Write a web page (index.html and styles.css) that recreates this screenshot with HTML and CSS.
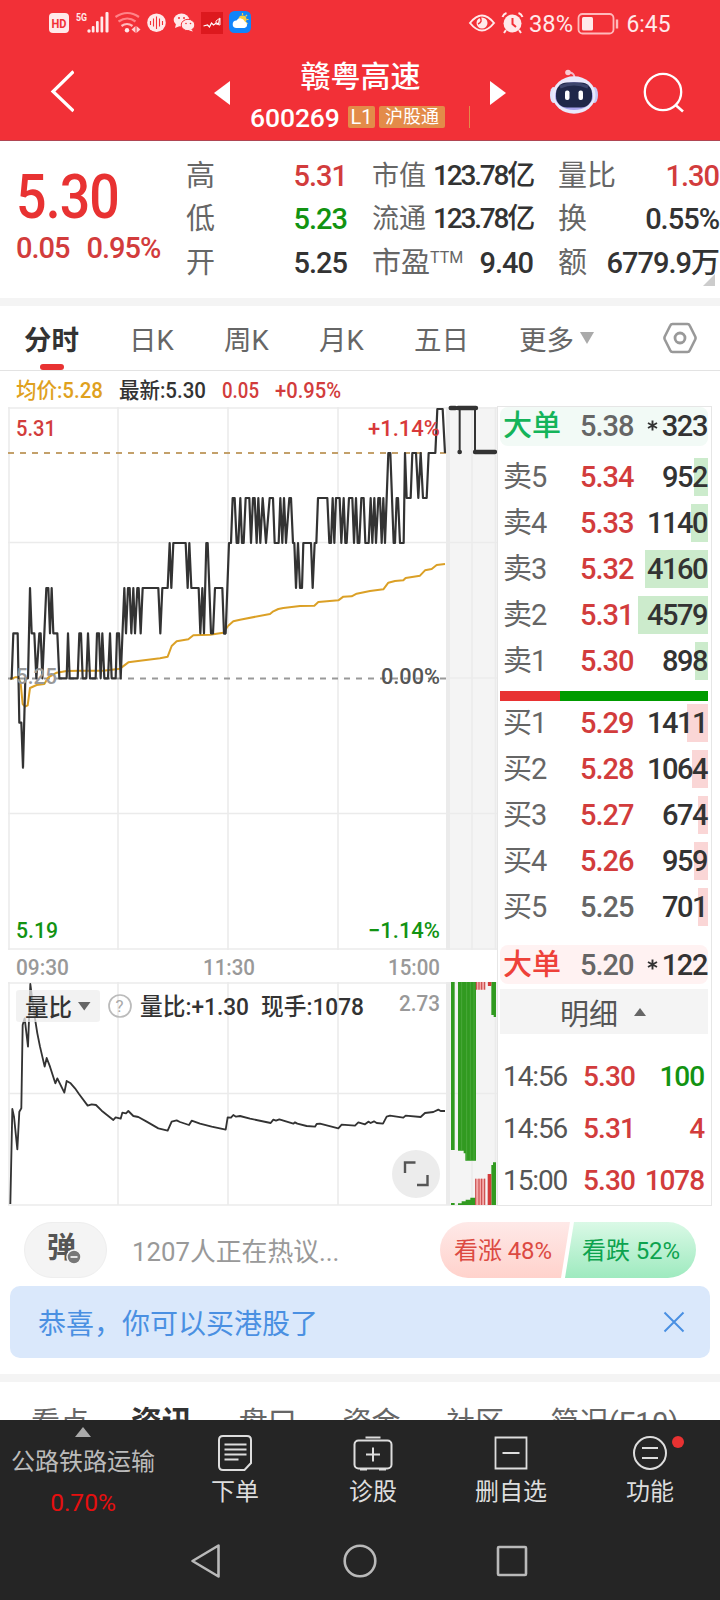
FILE: index.html
```html
<!DOCTYPE html>
<html lang="zh-CN">
<head>
<meta charset="utf-8">
<title>赣粤高速 600269</title>
<link rel="stylesheet" href="styles.css">
</head>
<body>
<div class="screen">
<header class="header">
  <div class="status">
    <svg class="status-left" width="206" height="28" viewBox="48 9 206 28">
      <rect x="49" y="13" width="20" height="20" rx="4" fill="#ffe9ea"/>
      <text x="51.500" y="28" font-size="13" font-weight="700" fill="#f23037" textLength="15" lengthAdjust="spacingAndGlyphs">HD</text>
      <text x="76" y="20.500" font-size="11" font-weight="700" fill="#ffe9ea" textLength="11" lengthAdjust="spacingAndGlyphs">5G</text>
      <g fill="#ffe9ea"><circle cx="89" cy="31" r="1.700"/><rect x="91.800" y="26" width="2.700" height="6.500" rx="1"/><rect x="96" y="21" width="2.700" height="11.500" rx="1"/><rect x="100.500" y="16.500" width="2.700" height="16" rx="1"/><rect x="105.500" y="12" width="3" height="20.500" rx="1"/></g>
      <g fill="none" stroke="#ff8388" stroke-width="2.200"><path d="M115.500 17q12-8 23.500 0M118.500 21.500q9-6 17 0"/><path d="M121.500 26q5.500-4 11 0" stroke="#ffb9bb"/></g>
      <circle cx="127" cy="30.300" r="2.200" fill="#ffe9ea"/><path d="M131.500 29.500l4-3.500v7zM140.500 29.500l-4-3.500v7z" fill="#ffd0d2"/>
      <circle cx="156.500" cy="22.700" r="9.300" fill="#ffe9ea"/><path d="M150.500 21v4M153.500 18.500v8M156.500 16.500v12.500M159.500 18.500v8M162.500 21v4" stroke="#f23037" stroke-width="1.100"/>
      <ellipse cx="181.500" cy="20" rx="7.800" ry="6.500" fill="#ffe9ea"/><path d="M176 24l-1 4 5-2z" fill="#ffe9ea"/><ellipse cx="188" cy="25" rx="6.800" ry="5.700" fill="#ffe9ea" stroke="#f23037"/><path d="M191 29l2 2.500-4-1z" fill="#ffe9ea"/><g fill="#f23037"><circle cx="179" cy="18" r="1"/><circle cx="184" cy="18" r="1"/><circle cx="186" cy="23.500" r=".8"/><circle cx="190.500" cy="23.500" r=".8"/></g>
      <rect x="201" y="12" width="22" height="22" fill="#dd191e"/><path d="M203.500 26l4-1 2 2 2-4 2 2 3-2 2 1 1-5" fill="none" stroke="#fff" stroke-width="1.200"/><path d="M216 24v-3l4-3v7z" fill="none" stroke="#ffe9ea"/>
      <rect x="229" y="11" width="22" height="22" rx="5.500" fill="#1184fb"/><circle cx="242.500" cy="19.500" r="4" fill="#f9cf43"/><path d="M242.500 13v2M247 15l-1.500 1.500M248.500 19.500h-2M247.500 24l-1.500-1.500" stroke="#f9cf43" stroke-width="1.200"/><path d="M236.500 28a3.800 3.800 0 0 1 0-7.600 4.600 4.600 0 0 1 8.200 1.200 3.300 3.300 0 0 1-.2 6.400z" fill="#fff"/>
    </svg>
    <svg class="status-right" width="206" height="28" viewBox="466 9 206 28">
      <path d="M470 23q12-15 24 0-12 15-24 0z" fill="none" stroke="#ffe9ea" stroke-width="2"/><circle cx="482" cy="23" r="5.500" fill="#ffe9ea"/><path d="M480 17q3 5-2 7" fill="none" stroke="#f23037" stroke-width="1.500"/>
      <circle cx="512.500" cy="23.500" r="9" fill="#ffe9ea"/><path d="M512.500 18v6l3.500 3" fill="none" stroke="#f23037" stroke-width="2"/><path d="M502.500 17q1-3 4-4M522.500 17q-1-3-4-4M506 30l-2 3M519 30l2 3" stroke="#ffe9ea" stroke-width="2" fill="none"/>
      <text x="529" y="32" font-size="23" fill="#ffe9ea" textLength="44" lengthAdjust="spacingAndGlyphs">38%</text>
      <rect x="578.500" y="14" width="35" height="19.500" rx="4" fill="none" stroke="#ffb9bb" stroke-width="1.800"/><rect x="582" y="17" width="11" height="13.500" rx="1.500" fill="#ffe9ea"/><path d="M617 19.500v9" stroke="#ffb9bb" stroke-width="2.400"/>
      <text x="626.500" y="32" font-size="23" fill="#ffe9ea" textLength="44" lengthAdjust="spacingAndGlyphs">6:45</text>
    </svg>
  </div>
  <div class="titlebar">
    <svg class="back" width="24" height="46" viewBox="50 68 24 46"><path d="M73.500 71.500L53 91.500l20.500 19.500" fill="none" stroke="#fff" stroke-width="3.200"/></svg>
    <svg class="prev" width="16" height="24" viewBox="0 0 16 24"><path d="M0 12L16 0v24z" fill="#fff"/></svg>
    <div class="stock">
      <div class="stock-name">赣粤高速</div>
      <div class="stock-code"><span class="code">600269</span><span class="tag tag-l">L1</span><span class="tag">沪股通</span><i class="tick"></i></div>
    </div>
    <svg class="next" width="16" height="24" viewBox="0 0 16 24"><path d="M16 12L0 0v24z" fill="#fff"/></svg>
    <svg class="robot" width="50" height="46" viewBox="549 68 50 46">
      <path d="M574.500 77q0-5-5-5.500" fill="none" stroke="#f3b7c8" stroke-width="1.800"/><circle cx="568" cy="71.500" r="2.800" fill="#f9c9d3"/>
      <ellipse cx="553.500" cy="94" rx="3.500" ry="8" fill="#dfe3fb"/><ellipse cx="594.500" cy="94" rx="3.500" ry="8" fill="#c6c8f6"/>
      <ellipse cx="574" cy="94" rx="21.500" ry="18.700" fill="#e9e9fb"/><ellipse cx="574" cy="95" rx="19" ry="14" fill="#a9a5ee"/>
      <rect x="556" y="81.500" width="36" height="25" rx="11" fill="#1f2749"/><path d="M560 86q14-6 28 0" stroke="#3c456c" stroke-width="3" fill="none"/>
      <rect x="565" y="89.500" width="4.500" height="9.500" rx="2" fill="#fff"/><rect x="578.500" y="89.500" width="4.500" height="9.500" rx="2" fill="#fff"/>
    </svg>
    <svg class="search" width="42" height="42" viewBox="643 72 42 42"><circle cx="663" cy="92" r="18.200" fill="none" stroke="#fff" stroke-width="2.300"/><path d="M675 104.500l8 7" stroke="#fff" stroke-width="2.600"/></svg>
  </div>
</header>

<section class="quote">
  <div class="price">
    <div class="last">5.30</div>
    <div class="change num"><span>0.05</span><span>0.95%</span></div>
  </div>
  <dl class="stats">
    <div><dt>高</dt><dd class="up">5.31</dd></div><div class="mid"><dt>市值</dt><dd class="tight">123.78亿</dd></div><div><dt class="wide">量比</dt><dd class="up">1.30</dd></div>
    <div><dt>低</dt><dd class="down">5.23</dd></div><div class="mid"><dt>流通</dt><dd class="tight">123.78亿</dd></div><div><dt>换</dt><dd>0.55%</dd></div>
    <div><dt>开</dt><dd>5.25</dd></div><div class="mid"><dt class="wide">市盈<sup>TTM</sup></dt><dd>9.40</dd></div><div><dt>额</dt><dd>6779.9万</dd></div>
  </dl>
  <i class="corner"></i>
</section>

<nav class="periods">
  <span class="period p1 active">分时</span><span class="period p2">日K</span><span class="period p2">周K</span><span class="period p2">月K</span><span class="period p3">五日</span><span class="period p4"><span>更多</span><i class="caret"></i></span>
  <svg class="gear" width="34" height="34" viewBox="663 321 34 34"><path d="M672.500 324h15q1.500 0 2.200 1.500l5.500 11q.7 1.500 0 3l-5.500 11q-.7 1.500-2.200 1.500h-15q-1.500 0-2.200-1.500l-5.500-11q-.7-1.500 0-3l5.500-11q.7-1.500 2.200-1.500z" fill="none" stroke="#999" stroke-width="2.600"/><circle cx="680" cy="338" r="5" fill="none" stroke="#999" stroke-width="2.800"/></svg>
</nav>

<main class="market">
  <svg class="chart" width="497" height="836" viewBox="0 371 497 836">
    <g class="t22">
      <text x="16" y="398" fill="#dfa11e" textLength="87" lengthAdjust="spacingAndGlyphs">均价:5.28</text>
      <text x="119" y="398" fill="#333" textLength="87" lengthAdjust="spacingAndGlyphs">最新:5.30</text>
      <text x="222" y="398" fill="#d23c3c" textLength="37" lengthAdjust="spacingAndGlyphs">0.05</text>
      <text x="275" y="398" fill="#d23c3c" textLength="66" lengthAdjust="spacingAndGlyphs">+0.95%</text>
    </g>
    <path d="M447 407h50v543h-50zM447 982h50v223h-50z" fill="#f4f4f4"/>
    <g stroke="#ebebeb" stroke-width="1.600" fill="none">
      <path d="M8 408h489M8 949h489M8 542.500h489M8 813.500h489M8 983h489M8 1205h489M8 1093.500h489M447 678h50"/>
      <path d="M9 407v543M118 407v543M228 407v543M338 407v543M9 982v223M118 982v223M228 982v223M338 982v223M472 407v543M472 982v223M495.500 407v543M495.500 982v223"/>
      <path d="M448 407v543M448 982v223" stroke-width="4"/>
    </g>
    <path d="M8 453h439" stroke="#c3a06a" stroke-width="2" stroke-dasharray="6 6"/>
    <path d="M8 678.500h439" stroke="#999" stroke-width="2" stroke-dasharray="6 6"/>
    <g transform="translate(0 400) scale(.33333)" fill="none" stroke-linejoin="round" stroke-width="6.600">
      <path stroke="#dba026" stroke-width="6" d="M31 838L45 832 55 832 62 850 68 912 75 920 83 916 90 864 110 855 133 852 145 832 170 818 200 813 240 812 310 812 360 806 385 787 420 782 480 775 503 770 515 738 530 724 565 718 580 706 630 704 670 698 684 678"/>
      <path stroke="#333" d="M31 835L35 835 40 700 53 700 58 968 64 968 69 1103 76 835 84 835 90 564 95 700 103 700 109 835 118 700 122 700 127 835 133 700 139 564 145 564 150 700 155 564 160 700 172 700 178 835 200 835 204 700 209 835 233 835 238 700 243 700 248 835 259 835 264 700 270 835 287 835 291 700 297 700 302 835 307 700 313 835 324 835 330 700 335 835 347 835 351 700 357 700 362 835 373 564 378 700 384 564 389 564 394 700 400 564 405 700 412 564 416 564 422 700 428 564 475 564 481 700 487 564 503 564 509 429 514 564 520 429 557 429 563 564 568 429 574 564 596 564 601 700 607 564 612 700 619 429 623 429 633 700 639 700 645 564 667 564 672 700 678 700"/>
    </g>
    <g transform="translate(220 400) scale(.33333)" fill="none" stroke-linejoin="round" stroke-width="6.600">
      <path stroke="#dba026" stroke-width="6" d="M24 678L40 664 60 659 150 642 160 634 175 627 190 624 240 618 283 617 295 606 355 601 370 590 395 589 410 581 450 573 490 568 505 548 525 543 550 541 557 534 600 527 615 511 635 507 650 495 675 492"/>
      <path stroke="#333" d="M10 700L17 700 27 429 33 429 38 294 44 294 50 429 55 429 61 294 66 429 71 429 77 294 88 294 93 429 99 294 104 294 110 429 115 294 121 429 128 294 138 429 149 294 159 294 164 429 176 429 181 294 187 429 192 294 198 429 208 294 213 294 219 429 223 429 228 564 234 429 240 564 246 564 250 429 273 429 278 564 284 429 289 429 294 294 322 294 328 429 333 429 338 294 343 429 348 294 359 294 364 429 371 294 376 429 380 429 387 294 397 294 402 429 408 294 413 429 418 429 424 294 431 294 436 429 446 429 452 294 457 429 463 294 468 429 475 294 480 294 485 429 490 294 495 429 505 159 511 159 521 429 525 429 530 294 534 294 540 429 551 429 555 159 560 294 572 294 577 159 588 159 595 294 602 159 609 294 620 294 626 159 646 159 652 27 668 27 675 159"/>
      <path stroke="#333" d="M690 24h80M719 24v132M765 24v132h62" stroke-width="6"/>
      <path stroke="#333" d="M692 24h14M714 24h54M765 156h60" stroke-width="13" stroke-linecap="round"/><circle cx="719" cy="156" r="5" fill="#333" stroke="#333" stroke-width="4"/>
    </g>
    <g class="t23">
      <text x="16" y="436" fill="#d23c3c" textLength="40" lengthAdjust="spacingAndGlyphs">5.31</text>
      <text x="368" y="436" fill="#d8393a" textLength="72" lengthAdjust="spacingAndGlyphs">+1.14%</text>
      <text x="16" y="684" fill="#999" textLength="41" lengthAdjust="spacingAndGlyphs">5.25</text>
      <text x="381" y="684" fill="#555" textLength="59" lengthAdjust="spacingAndGlyphs">0.00%</text>
      <text x="16" y="938" fill="#129312" textLength="42" lengthAdjust="spacingAndGlyphs">5.19</text>
      <text x="368" y="938" fill="#129312" textLength="72" lengthAdjust="spacingAndGlyphs">−1.14%</text>
      <g fill="#999"><text x="16" y="975" textLength="53" lengthAdjust="spacingAndGlyphs">09:30</text><text x="203" y="975" textLength="52" lengthAdjust="spacingAndGlyphs">11:30</text><text x="388" y="975" textLength="52" lengthAdjust="spacingAndGlyphs">15:00</text><text x="399" y="1011" textLength="41" lengthAdjust="spacingAndGlyphs">2.73</text></g>
    </g>
    <g transform="translate(0 900) scale(.33333)">
      <path fill="none" stroke="#333" stroke-width="5.500" stroke-linejoin="round" d="M31 912L37 627 42 650 52 748 58 635 64 625 68 375 74 355 84 440 91 252 97 300 104 350 112 400 120 440 134 500 140 474 150 500 166 550 172 535 193 578 200 543 212 550 225 565 237 582 263 617 275 613 288 615 305 632 340 660 347 652 362 656 367 638 378 640 385 633 400 648 415 651 440 665 475 685 503 692 515 665 530 661 540 666 567 675 575 662 600 671 635 680 677 689 683 652 693 653 700 645 708 650 720 648 750 656 812 669 820 659 828 662 838 658 880 671 885 667 892 671 920 678 945 680 950 672 960 671 1015 685 1025 674 1065 677 1075 667 1095 673 1105 665 1112 669 1122 664 1130 669 1149 671 1160 650 1170 647 1210 653 1217 647 1262 651 1275 639 1300 636 1315 629 1322 633 1335 633"/>
      <path fill="#319a20" d="M1353 246h11v504h-11zM1374 246h54v536h-32v-22h-5v-8h-17zM1474 246h14v105h-7v-6h-7zM1353 909h11v6h-11zM1374 910h11v-6h12v-5h14v-6h15v22h-52zM1474 795h5v-8h9v128h-14z"/>
      <path stroke="#56b148" stroke-width="2" d="M1385 246v505M1400 246v535M1411 246v535M1422 246v535"/>
      <path fill="#f3a9a9" d="M1428 246h28v23h-28zM1428 836h28v79h-28zM1463 246h4v11h-4z"/>
      <path stroke="#c84343" stroke-width="3" d="M1429 246v23M1437 246v23M1445 246v23M1454 246v23M1427 836v79M1437 836v79M1445 836v79M1454 836v79"/>
      <path fill="#d23c3c" d="M1464 246h10v12h-10zM1463 822h11v93h-11z"/>
    </g>
    <rect x="16" y="990" width="84" height="32" rx="3" fill="#eee" fill-opacity=".75"/>
    <g class="t24" fill="#333"><text x="25" y="1016" textLength="47" lengthAdjust="spacingAndGlyphs">量比</text><text x="140" y="1015" textLength="109" lengthAdjust="spacingAndGlyphs">量比:+1.30</text><text x="261" y="1015" textLength="103" lengthAdjust="spacingAndGlyphs">现手:1078</text></g>
    <path d="M78 1002h12.500l-6.250 8.500z" fill="#666"/>
    <circle cx="120" cy="1006" r="11" fill="none" stroke="#bbb" stroke-width="1.700"/><text x="115.500" y="1012" font-size="17" fill="#aaa">?</text>
    <circle cx="416" cy="1174" r="24" fill="#ececec"/><path d="M405 1173v-10.500h10.500M417 1185h10.500V1175" fill="none" stroke="#555" stroke-width="2.400"/>
  </svg>

  <aside class="book">
    <div class="big sell"><span>大单</span><span>5.38</span><span><svg class="star" width="11" height="11" viewBox="0 0 11 11"><path d="M5.500 .500v10M1 3l9 5M10 3l-9 5" stroke="#333" stroke-width="1.900"/></svg>323</span></div>
    <div class="levels">
      <div class="level"><span>卖5</span><span class="up">5.34</span><span><i style="width:14px"></i>952</span></div>
      <div class="level"><span>卖4</span><span class="up">5.33</span><span><i style="width:17px"></i>1140</span></div>
      <div class="level"><span>卖3</span><span class="up">5.32</span><span><i style="width:63px"></i>4160</span></div>
      <div class="level"><span>卖2</span><span class="up">5.31</span><span><i style="width:70px"></i>4579</span></div>
      <div class="level"><span>卖1</span><span class="up">5.30</span><span><i style="width:13px"></i>898</span></div>
    </div>
    <div class="ratio"><i></i></div>
    <div class="levels bids">
      <div class="level"><span>买1</span><span class="up">5.29</span><span><i style="width:21px"></i>1411</span></div>
      <div class="level"><span>买2</span><span class="up">5.28</span><span><i style="width:16px"></i>1064</span></div>
      <div class="level"><span>买3</span><span class="up">5.27</span><span><i style="width:10px"></i>674</span></div>
      <div class="level"><span>买4</span><span class="up">5.26</span><span><i style="width:14px"></i>959</span></div>
      <div class="level"><span>买5</span><span class="flat">5.25</span><span><i style="width:10px"></i>701</span></div>
    </div>
    <div class="big buy"><span>大单</span><span>5.20</span><span><svg class="star" width="11" height="11" viewBox="0 0 11 11"><path d="M5.500 .500v10M1 3l9 5M10 3l-9 5" stroke="#333" stroke-width="1.900"/></svg>122</span></div>
    <div class="detail">明细<i></i></div>
    <div class="trades">
      <div class="trade"><span>14:56</span><span class="up">5.30</span><span class="down">100</span></div>
      <div class="trade"><span>14:56</span><span class="up">5.31</span><span class="up">4</span></div>
      <div class="trade"><span>15:00</span><span class="up">5.30</span><span class="up">1078</span></div>
    </div>
  </aside>
</main>

<section class="chat">
  <div class="danmu">弹<svg width="16" height="16" viewBox="0 0 16 16"><circle cx="8" cy="8" r="7" fill="#777" stroke="#f5f5f5" stroke-width="1.500"/><path d="M4.500 8h7" stroke="#fff" stroke-width="1.600"/></svg></div>
  <div class="chat-text">1207人正在热议...</div>
  <div class="vote"><span class="bull">看涨 48%</span><span class="bear">看跌 52%</span></div>
</section>
<section class="notice"><span>恭喜，你可以买港股了</span><svg width="22" height="22" viewBox="0 0 22 22"><path d="M1.500 1.500l19 19M20.500 1.500l-19 19" stroke="#4a90e2" stroke-width="2"/></svg></section>
<nav class="sections"><span>看点</span><span class="on">资讯</span><span>盘口</span><span>资金</span><span>社区</span><span class="last-tab">简况(F10)</span></nav>

<footer class="footer">
  <div class="toolbar">
    <div class="sector"><i></i><span>公路铁路运输</span><em>0.70%</em></div>
    <div class="tool"><svg width="40" height="38" viewBox="0 0 40 38"><path d="M8 2h24q4 0 4 4v23l-6.500 7H8q-4 0-4-4V6q0-4 4-4z" fill="none" stroke="#ddd" stroke-width="2"/><path d="M9.500 10.500h22M9.500 15.500h22M9.500 20.500h22M9.500 25.500h14" stroke="#ddd" stroke-width="1.800" fill="none"/></svg><span>下单</span></div>
    <div class="tool"><svg width="40" height="38" viewBox="0 0 40 38"><rect x="1.500" y="6.500" width="37" height="28" rx="4" fill="none" stroke="#ddd" stroke-width="2"/><path d="M12.500 3.500h15M7 35.500h7M26 35.500h7M13 20.500h14M20 13.500v14" stroke="#ddd" stroke-width="2"/></svg><span>诊股</span></div>
    <div class="tool"><svg width="40" height="38" viewBox="0 0 40 38"><path d="M4.500 3.500h31v31h-31zM11.500 19h17" fill="none" stroke="#ddd" stroke-width="1.800"/></svg><span>删自选</span></div>
    <div class="tool last-tool"><svg width="40" height="38" viewBox="0 0 40 38"><circle cx="20" cy="19" r="16" fill="none" stroke="#ddd" stroke-width="2"/><path d="M12 14h16M12 24h16" stroke="#ddd" stroke-width="2"/></svg><i class="dot"></i><span>功能</span></div>
  </div>
  <div class="system">
    <svg width="340" height="40" viewBox="189 1541 340 40" fill="none" stroke="#b9b9b9" stroke-width="2.600" stroke-linejoin="round"><path d="M192.500 1561L218.500 1545.500v31z"/><circle cx="360" cy="1561" r="15.300"/><rect x="498" y="1547" width="28" height="28" rx="1"/></svg>
  </div>
</footer>
</div>
</body>
</html>
```
FILE: styles.css
```css
* { box-sizing: border-box; }
body { margin: 0; background: #fff; font-family: Roboto, "Noto Sans CJK SC", sans-serif; color: #333; }
i, em { font-style: normal; }
svg { display: block; }
.screen { width: 720px; height: 1600px; overflow: hidden; display: flex; flex-direction: column; background: #fff; }
.up { color: #d23c3c !important; }
.down { color: #129312 !important; }
.flat { color: #666; }

.header { height: 141px; background: #f23037; border-bottom: 1px solid #b04552; flex: none; }
.status { height: 46px; padding: 9px 48px 0; display: flex; justify-content: space-between; }
.titlebar { height: 94px; display: flex; align-items: center; padding: 0 35px 0 50px; color: #fff; }
.back { margin-right: 140px; margin-top: -4px; }
.stock { width: 260px; height: 94px; display: flex; flex-direction: column; align-items: center; padding-top: 10px; }
.stock-name { font-size: 30px; line-height: 42px; font-weight: 500; margin-right: -1px; height: 48px; }
.stock-code { width: 100%; padding-left: 20px; display: flex; align-items: center; height: 26px; }
.code { font-size: 26.500px; font-weight: 500; width: 98px; letter-spacing: -.100px; }
.tag { height: 22px; line-height: 22px; background: #e38b49; border-radius: 2px; font-size: 18px; width: 66px; text-align: center; }
.tag-l { width: 27px; margin-right: 4px; font-size: 20px; }
.tick { width: 1px; height: 22px; background: #e38b49; margin-left: 24px; }
.robot { margin-left: 43px; margin-right: 44px; margin-top: -2px; }

.quote { height: 165px; border-bottom: 8px solid #f4f4f4; display: flex; position: relative; flex: none; }
.price { width: 186px; padding: 21px 0 0 16px; }
.last { font-size: 61px; line-height: 70px; font-weight: 500; color: #e83232; transform: scaleX(.88); transform-origin: left; letter-spacing: -1px; }
.change { display: flex; gap: 17px; font-size: 29px; line-height: 32px; color: #d23c3c; letter-spacing: -1px; white-space: nowrap; font-weight: 500; }
.stats { margin: 0; padding-top: 13px; width: 534px; display: grid; grid-template-columns: 161px 161px 161px; column-gap: 25px; grid-auto-rows: 43.500px; }
.stats > div { display: flex; justify-content: space-between; align-items: center; line-height: 42px; white-space: nowrap; }
.stats dt { font-size: 29px; color: #666; }
.stats .mid dt { font-size: 27px; }
.stats .mid dt.wide { font-size: 29px; }
.stats dd { margin: 0; font-size: 29px; font-weight: 500; letter-spacing: -1px; }
.stats dd.tight { font-size: 28px; letter-spacing: -2.200px; }
.stats sup { font-size: 16px; line-height: 0; vertical-align: 10px; }
.corner { position: absolute; right: 5px; bottom: 12px; border-left: 12px solid transparent; border-bottom: 12px solid #ccc; }

.periods { height: 65px; border-bottom: 1px solid #e3e3e3; padding-left: 24px; display: flex; align-items: center; color: #666; font-size: 27.500px; flex: none; }
.period { height: 64px; line-height: 70px; white-space: nowrap; position: relative; }
.p1 { width: 105px; } .p2 { width: 95px; } .p3 { width: 105px; } .p4 { width: 144px; display: flex; align-items: center; }
.p4 span { padding-top: 5px; }
.active { color: #333; font-weight: 700; }
.active::after { content: ""; position: absolute; left: 16px; bottom: 0; width: 24px; height: 6px; border-radius: 3px; background: #e83232; }
.caret { margin-left: 6px; border: 7.500px solid transparent; border-top: 12px solid #aaa; border-bottom: 0; }

.market { display: flex; height: 836px; flex: none; }
.chart { flex: none; font-family: Roboto, "Noto Sans CJK SC", sans-serif; }
.t22 { font-size: 21.500px; font-weight: 500; } .t23 { font-size: 22.500px; font-weight: 500; } .t24 { font-size: 23.500px; font-weight: 500; }
.book { margin-top: 35px; height: 800px; width: 215px; border: 1px solid #e6e6e6; padding: 0 3px 0 2px; }
.big { height: 39px; border-radius: 8px; background: #f2faf6; display: grid; grid-template-columns: 77px 60px 1fr; align-items: center; padding-left: 3px; font-size: 29px; letter-spacing: -1px; color: #666; line-height: 36px; }
.big span:first-child { letter-spacing: 0; }
.big span:nth-child(2) { font-weight: 500; }
.big span:last-child { display: flex; justify-content: flex-end; align-items: center; color: #333; font-weight: 500; letter-spacing: -1.400px; padding-right: 1px; }
.star { margin-right: 4px; }
.sell span { margin-top: -2px; }
.sell span:first-child { color: #14b45a; font-weight: 500; }
.buy { background: #fff2f2; }
.buy span:first-child { color: #ee4139; font-weight: 500; }
.levels { padding-top: 12px; }
.level { height: 38px; line-height: 38px; margin-bottom: 8px; display: grid; grid-template-columns: 77px 60px 1fr; padding-left: 3px; font-size: 29px; color: #666; letter-spacing: -1px; }
.level span:nth-child(2) { font-weight: 500; }
.level span:last-child { color: #333; text-align: right; position: relative; z-index: 0; font-weight: 500; letter-spacing: -1.500px; padding-right: 1px; }
.level i { position: absolute; right: 0; top: 0; height: 38px; background: #ccebcc; z-index: -1; }
.bids { padding-top: 3px; }
.bids .level i { background: #fad6d6; }
.ratio { height: 10px; background: #009b00; margin-top: 11px; }
.ratio i { display: block; width: 60px; height: 10px; background: #e83232; }
.buy { margin-top: 19px; }
.detail { height: 45px; margin-top: 5px; background: #f4f4f4; display: flex; align-items: center; justify-content: center; gap: 16px; font-size: 29px; color: #555; padding-right: 2px; }
.detail i { border: 6px solid transparent; border-bottom: 8px solid #666; border-top: 0; }
.trades { padding-top: 16px; }
.trade { height: 52px; display: grid; grid-template-columns: 80px 60px 1fr; align-items: center; padding: 0 4px 0 3px; font-size: 28px; letter-spacing: -1.100px; color: #555; }
.trade span:nth-child(2) { font-weight: 500; letter-spacing: -.900px; }
.trade span:last-child { font-weight: 500; text-align: right; }

.chat { height: 56px; margin-top: 15px; display: flex; align-items: center; padding: 0 24px; flex: none; }
.danmu { width: 83px; height: 56px; border-radius: 28px; background: #f4f4f4; border: 1px solid #eee; font-size: 29px; font-weight: 700; color: #555; line-height: 51px; padding-left: 22px; position: relative; flex: none; }
.danmu svg { position: absolute; left: 41px; top: 26px; }
.chat-text { width: 333px; flex: none; padding-left: 25px; padding-top: 3px; font-size: 25.800px; line-height: 54px; color: #999; white-space: nowrap; }
.vote { display: flex; width: 256px; flex: none; font-size: 24px; line-height: 58px; letter-spacing: -.100px; white-space: nowrap; }
.bull { width: 130px; height: 56px; padding-left: 14px; color: #dc4a42; border-radius: 28px 0 0 28px; background: linear-gradient(#fee9e8, #ffd2cc); clip-path: polygon(0 0, 100% 0, 121px 100%, 0 100%); }
.bear { width: 131px; height: 56px; margin-left: -5px; padding-left: 17px; color: #0da34e; border-radius: 0 28px 28px 0; background: linear-gradient(#daf9e6, #9eeabf); clip-path: polygon(9px 0, 100% 0, 100% 100%, 0 100%); }
.notice { height: 72px; margin: 8px 10px 0; border-radius: 10px; background: #dae8fb; padding: 0 25px 0 28px; display: flex; align-items: center; justify-content: space-between; font-size: 28px; color: #4a90e2; flex: none; }
.sections { margin-top: 16px; height: 46px; border-top: 8px solid #f4f4f4; overflow: hidden; padding: 20px 41px 0 31px; display: flex; justify-content: space-between; font-size: 29px; line-height: 42px; color: #666; flex: none; }
.on { font-weight: 700; font-size: 31px; color: #333; margin-left: -4px; }
.last-tab { letter-spacing: .300px; }

.footer { height: 180px; background: #252525; color: #ddd; flex: none; }
.toolbar { height: 107px; display: flex; }
.sector { width: 166px; display: flex; flex-direction: column; align-items: center; padding-top: 7px; font-size: 24px; line-height: 34px; color: #bbb; }
.sector i { border: 8px solid transparent; border-bottom: 10px solid #aaa; border-top: 0; }
.sector span { margin-top: 8px; white-space: nowrap; }
.sector em { margin-top: 7px; color: #e60f0f; font-size: 24.500px; }
.tool { width: 138px; padding-top: 14px; display: flex; flex-direction: column; align-items: center; font-size: 24px; line-height: 34px; position: relative; }
.tool span { margin-top: 3px; }
.last-tool { left: 1px; }
.dot { position: absolute; left: 91px; top: 16px; width: 12px; height: 12px; border-radius: 50%; background: #e83232; }
.system { padding: 14px 0 0 189px; }
```
